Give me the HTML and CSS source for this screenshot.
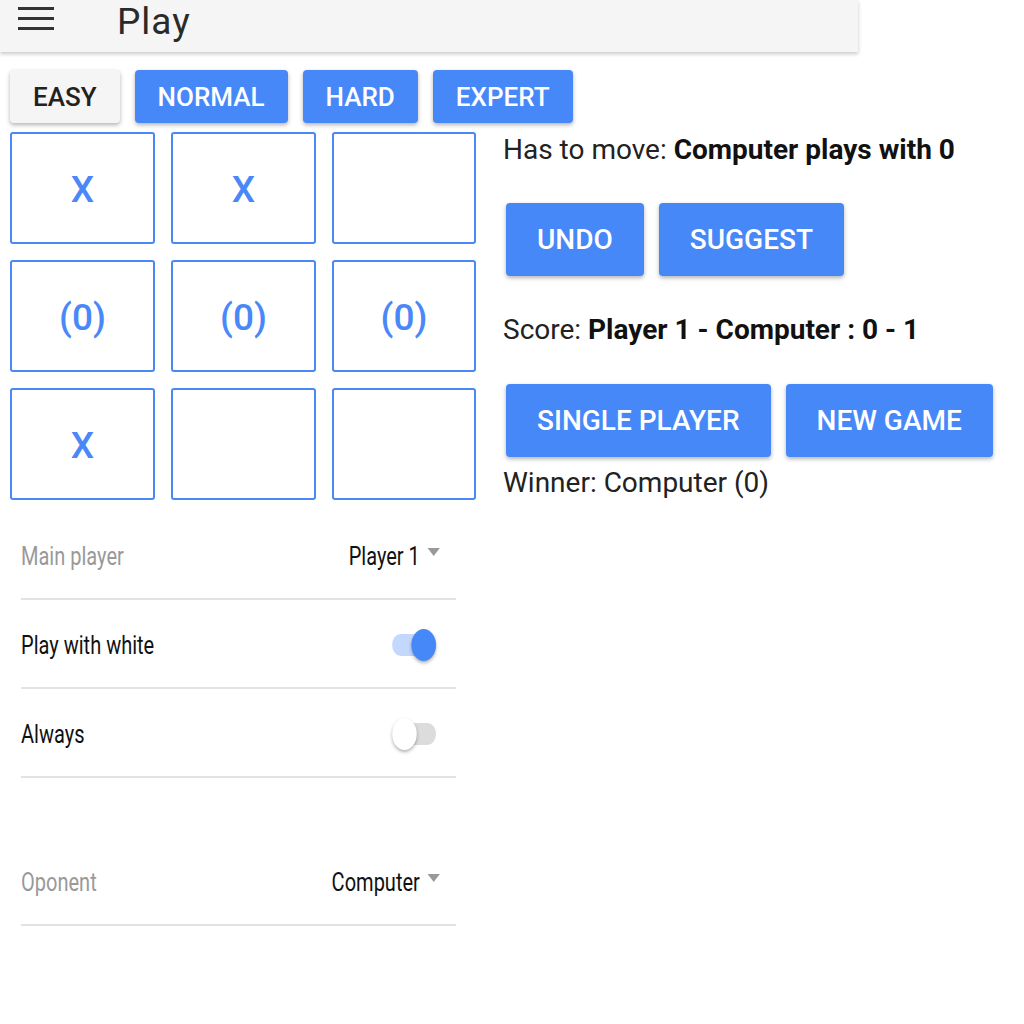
FILE: index.html
```html
<!DOCTYPE html>
<html>
<head>
<meta charset="utf-8">
<link rel="stylesheet" href="styles.css">
</head>
<body>
<header class="appbar">
  <svg class="menu" width="36" height="26" viewBox="0 0 36 26"><rect x="0" y="1" width="36" height="3" fill="#333"/><rect x="0" y="11" width="36" height="3" fill="#333"/><rect x="0" y="21" width="36" height="3" fill="#333"/></svg>
  <h1 class="title">Play</h1>
</header>
<div class="levels">
  <button class="btn btn-light">EASY</button>
  <button class="btn btn-blue">NORMAL</button>
  <button class="btn btn-blue">HARD</button>
  <button class="btn btn-blue">EXPERT</button>
</div>
<main class="main">
  <section class="left">
    <div class="board">
      <div class="cell">X</div>
      <div class="cell">X</div>
      <div class="cell"></div>
      <div class="cell">(0)</div>
      <div class="cell">(0)</div>
      <div class="cell">(0)</div>
      <div class="cell">X</div>
      <div class="cell"></div>
      <div class="cell"></div>
    </div>
    <div class="settings-wrap">
      <div class="settings">
        <div class="row">
          <span class="label muted">Main player</span>
          <span class="select">Player 1 <span class="caret"></span></span>
        </div>
        <div class="row">
          <span class="label">Play with white</span>
          <span class="toggle on"><span class="thumb"></span></span>
        </div>
        <div class="row">
          <span class="label">Always</span>
          <span class="toggle"><span class="thumb"></span></span>
        </div>
        <div class="spacer"></div>
        <div class="row">
          <span class="label muted">Oponent</span>
          <span class="select">Computer <span class="caret"></span></span>
        </div>
      </div>
    </div>
  </section>
  <section class="right">
    <p class="info">Has to move: <b>Computer plays with 0</b></p>
    <div class="actions">
      <button class="btn btn-big">UNDO</button>
      <button class="btn btn-big">SUGGEST</button>
    </div>
    <p class="info score">Score: <b>Player 1 - Computer : 0 - 1</b></p>
    <div class="actions">
      <button class="btn btn-big">SINGLE PLAYER</button>
      <button class="btn btn-big">NEW GAME</button>
    </div>
    <p class="info winner">Winner: Computer (0)</p>
  </section>
</main>
</body>
</html>
```
FILE: styles.css
```css
* { box-sizing: border-box; }
html, body { margin: 0; padding: 0; background: #fff; }
body { font-family: Roboto, "Liberation Sans", sans-serif; color: #222; }

.appbar {
  width: 858px;
  height: 52px;
  background: #f5f5f5;
  box-shadow: 0 2px 4px rgba(0,0,0,0.22);
  display: flex;
  align-items: flex-start;
  position: relative;
}
.menu { margin: 6px 0 0 18px; }
.title {
  margin: 0 0 0 63px;
  font-size: 37px;
  letter-spacing: 1px;
  line-height: 1.18;
  font-weight: 400;
  color: #2a2a2a;
}

.btn {
  font-family: Roboto, "Liberation Sans", sans-serif;
  font-weight: 500;
  border: none;
  border-radius: 4px;
  cursor: pointer;
  box-shadow: 0 2px 4px rgba(0,0,0,0.3);
}
.levels {
  display: flex;
  gap: 15px;
  margin: 18px 0 0 10px;
}
.levels .btn {
  height: 53px;
  padding: 0 23px;
  font-size: 26px;
}
.btn-light { background: #f5f5f5; color: #222; }
.btn-blue { background: #4788f8; color: #fff; }

.main {
  display: flex;
  gap: 26px;
  margin: 9px 0 0 10px;
}
.left { width: 467px; }
.board {
  display: grid;
  grid-template-columns: 145px 145px 144px;
  grid-auto-rows: 112px;
  column-gap: 16px;
  row-gap: 16px;
}
.cell {
  border: 2px solid #4a88f8;
  border-radius: 3px;
  display: flex;
  align-items: center;
  justify-content: center;
  color: #4a88f8;
  font-size: 37px;
  font-weight: 500;
  padding-top: 2px;
}

.settings-wrap { margin: 11px 0 0 11px; }
.settings {
  width: 565px;
  transform: scaleX(0.77);
  transform-origin: left top;
}
.row {
  height: 89px;
  border-bottom: 2px solid #e2e2e2;
  display: flex;
  align-items: center;
  justify-content: space-between;
  font-size: 26px;
  padding-top: 2px;
}
.spacer { height: 59px; }
.label { color: #111; }
.muted { color: #999; }
.select {
  display: flex;
  align-items: center;
  color: #111;
  margin-right: 21px;
}
.caret {
  margin-left: 10px;
  width: 0; height: 0;
  border-left: 8px solid transparent;
  border-right: 8px solid transparent;
  border-top: 8px solid #999;
  margin-top: -8px;
}
.toggle {
  position: relative;
  width: 57px;
  height: 22px;
  border-radius: 11px;
  background: #dcdcdc;
  margin-right: 26px;
}
.toggle .thumb {
  position: absolute;
  top: -5px;
  left: 0;
  width: 32px;
  height: 32px;
  border-radius: 50%;
  background: #fff;
  box-shadow: 0 2px 4px rgba(0,0,0,0.3);
}
.toggle.on { background: #c3d8fc; }
.toggle.on .thumb { left: auto; right: 0; background: #4788f8; }

.right { padding-top: 2px; }
.info {
  margin: 0;
  font-size: 28px;
  line-height: 32px;
  color: #222;
}
.info b { color: #111; font-weight: 700; }
.actions {
  display: flex;
  gap: 15px;
  margin: 37px 0 0 3px;
}
.btn-big {
  height: 73px;
  padding: 0 31px;
  font-size: 28px;
  background: #4788f8;
  color: #fff;
}
.score { margin-top: 38px; }
.actions + .winner { margin-top: 10px; }
.score + .actions { margin-top: 38px; }
```
